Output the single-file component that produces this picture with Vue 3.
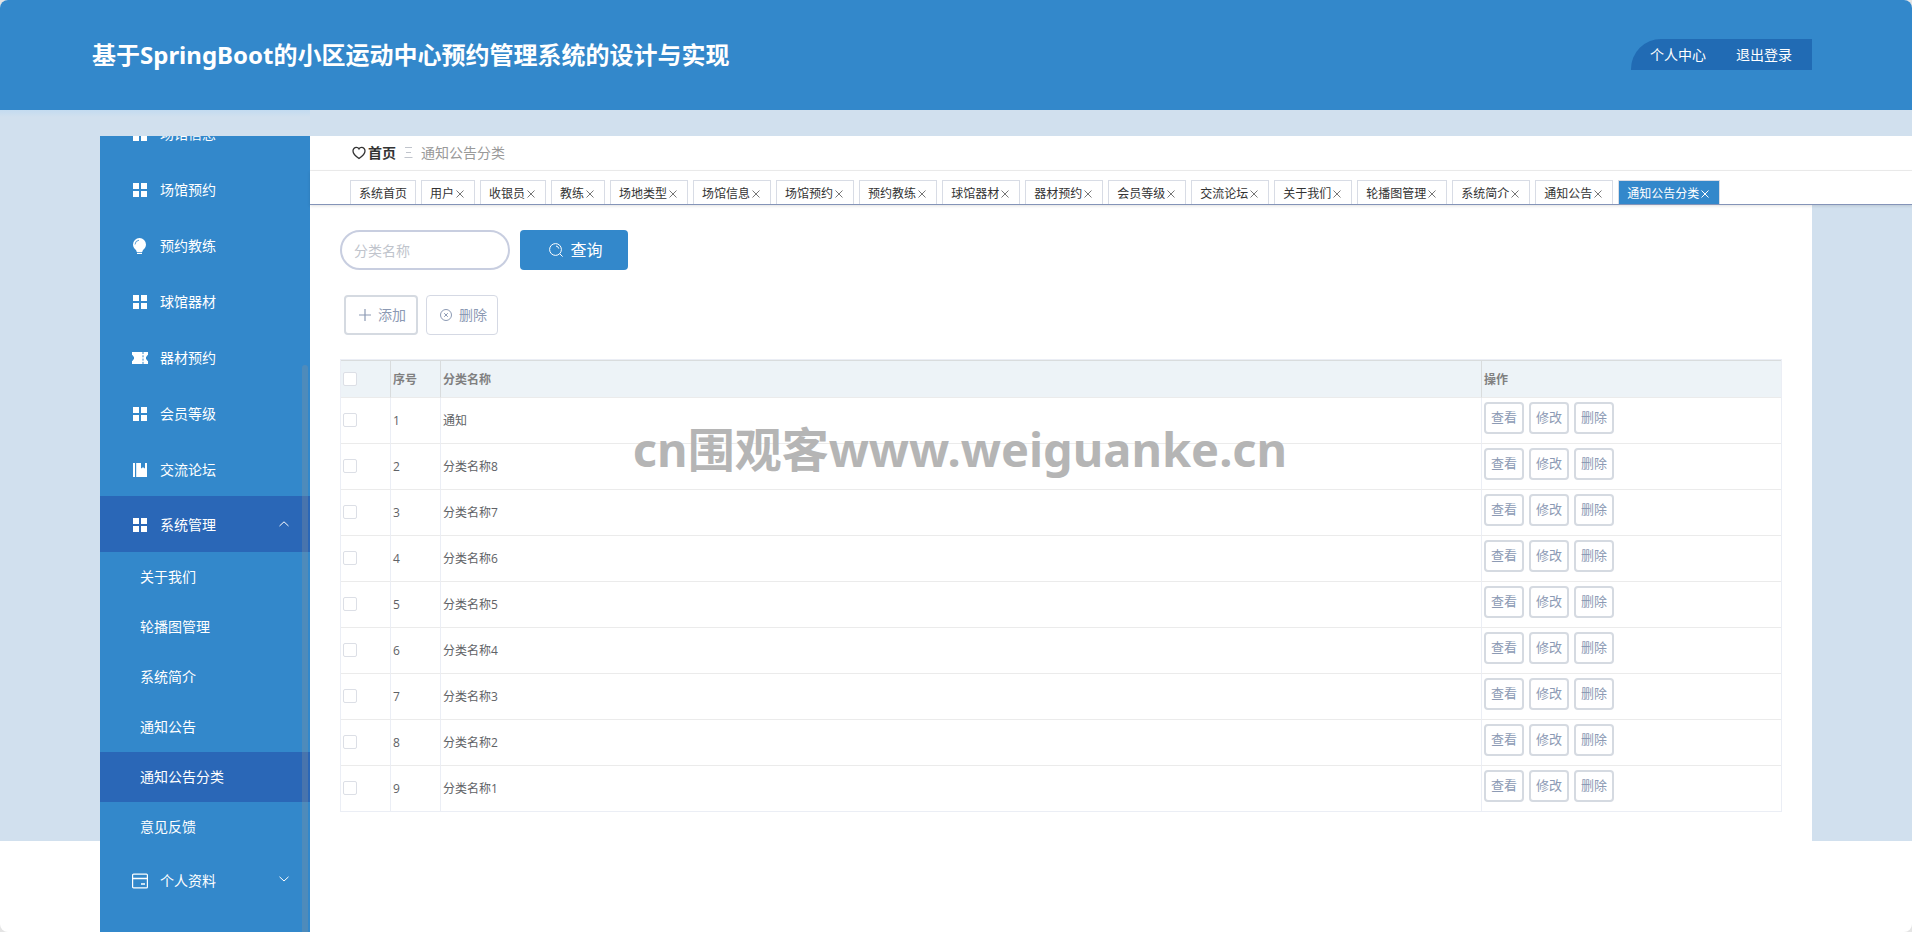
<script setup>
import { ref } from 'vue'

const menu = [
  { label: '场馆信息', icon: 'grid' },
  { label: '场馆预约', icon: 'grid' },
  { label: '预约教练', icon: 'bulb' },
  { label: '球馆器材', icon: 'grid' },
  { label: '器材预约', icon: 'ticket' },
  { label: '会员等级', icon: 'grid' },
  { label: '交流论坛', icon: 'book' },
]
const submenu = ['关于我们', '轮播图管理', '系统简介', '通知公告', '通知公告分类', '意见反馈']
const tabs = [
  '系统首页', '用户', '收银员', '教练', '场地类型', '场馆信息', '场馆预约', '预约教练', '球馆器材',
  '器材预约', '会员等级', '交流论坛', '关于我们', '轮播图管理', '系统简介', '通知公告', '通知公告分类',
]
const current = '通知公告分类'
const rows = ['通知', '分类名称8', '分类名称7', '分类名称6', '分类名称5', '分类名称4', '分类名称3', '分类名称2', '分类名称1']
const keyword = ref('')
</script>

<template>
  <div class="shell">
    <header class="top">
      <h1>基于SpringBoot的小区运动中心预约管理系统的设计与实现</h1>
      <nav class="user-nav">
        <a href="#">个人中心</a>
        <a href="#">退出登录</a>
      </nav>
    </header>

    <div class="body">
      <aside class="side">
        <nav class="menu">
          <ul class="menu-list">
            <li v-for="item in menu" :key="item.label">
              <a class="item" href="#">
                <svg class="icon" viewBox="0 0 16 16" aria-hidden="true">
                  <path v-if="item.icon === 'grid'" d="M1 1h6v6H1zM9 1h6v6H9zM1 9h6v6H1zM9 9h6v6H9z" fill="currentColor" />
                  <g v-else-if="item.icon === 'bulb'">
                    <path d="M7.500 0a6.500 6.500 0 0 0-6.500 6.500c0 2.600 1.500 4.200 3 5.500l.8 2h5.400l.8-2c1.500-1.300 3-2.900 3-5.500A6.500 6.500 0 0 0 7.500 0zM5 14.800h5V16H5z" fill="currentColor" />
                    <path d="M3 6.500A4.500 4.500 0 0 1 7 2.200" fill="none" stroke="#3388cb" stroke-width=".8" />
                  </g>
                  <g v-else-if="item.icon === 'ticket'">
                    <path d="M0 2h16v3.200h-1v1.300h-1v3h1v1.300h1V14H0v-3.200h1V9.500h1v-3H1V5.200H0z" fill="currentColor" />
                    <path d="M11 2v12" stroke="#3388cb" stroke-width="1" stroke-dasharray="2 1.300" />
                  </g>
                  <path v-else d="M1 1h2v14H1zM4.200 1H9v5.500l2-1.300 2 1.300V1h2v14H4.200z" fill="currentColor" />
                </svg>
                <span>{{ item.label }}</span>
              </a>
            </li>
            <li>
              <button class="group open" type="button" aria-expanded="true">
                <svg class="icon" viewBox="0 0 16 16" aria-hidden="true">
                  <path d="M1 1h6v6H1zM9 1h6v6H9zM1 9h6v6H1zM9 9h6v6H9z" fill="currentColor" />
                </svg>
                <span>系统管理</span>
                <svg class="arrow" viewBox="0 0 12 12" aria-hidden="true"><path d="M1.500 7L6 2.800 10.500 7" /></svg>
              </button>
              <ul>
                <li v-for="name in submenu" :key="name">
                  <a class="sub" :class="{ active: name === current }" href="#">{{ name }}</a>
                </li>
              </ul>
            </li>
            <li>
              <button class="group" type="button" aria-expanded="false">
                <svg class="icon" viewBox="0 0 16 16" fill="none" stroke="currentColor" aria-hidden="true">
                  <rect x=".6" y="1.100" width="14.800" height="13.800" rx="1" stroke-width="1.200" />
                  <path d="M.6 5.500h14.800M9 11h4" stroke-width="1.300" />
                </svg>
                <span>个人资料</span>
                <svg class="arrow" viewBox="0 0 12 12" aria-hidden="true"><path d="M1.500 1.800L6 6l4.500-4.200" /></svg>
              </button>
            </li>
          </ul>
          <div class="scroll-thumb"></div>
        </nav>
      </aside>

      <main class="main">
        <div class="crumbs">
          <svg class="heart" viewBox="0 0 14 14" fill="none" stroke="currentColor" stroke-width="1.300" aria-hidden="true">
            <path d="M7 12.500C4.800 11 1 8.300 1 5a3.400 3.400 0 0 1 3.400-3.600C5.600 1.400 6.500 2 7 2.900c.5-.9 1.400-1.500 2.600-1.500A3.400 3.400 0 0 1 13 5c0 3.300-3.800 6-6 7.500z" />
          </svg>
          <a class="home" href="#">首页</a>
          <svg class="sep" viewBox="0 0 9 12" fill="none" stroke="currentColor" aria-hidden="true">
            <path d="M1 .5h7M2 5.500h5M.500 10.500h8" />
          </svg>
          <span class="here">{{ current }}</span>
        </div>

        <div class="tabs">
          <div v-for="(tab, i) in tabs" :key="tab" class="tab" :class="{ active: tab === current }">
            <a href="#">{{ tab }}</a>
            <button v-if="i > 0" type="button" :aria-label="'关闭' + tab">
              <svg viewBox="0 0 12 12" aria-hidden="true"><path d="M2.500 2.500l7 7M9.500 2.500l-7 7" /></svg>
            </button>
          </div>
        </div>

        <section class="content">
          <form class="search" @submit.prevent>
            <input v-model="keyword" type="text" placeholder="分类名称" aria-label="分类名称" />
            <button type="submit">
              <svg viewBox="0 0 14 14" fill="none" stroke="currentColor" aria-hidden="true">
                <circle cx="6.500" cy="6.500" r="5.900" />
                <path d="M10.800 10.800L13.600 13.600M7 3a3.300 3.300 0 0 1 2.800 2.600" />
              </svg>
              <span>查询</span>
            </button>
          </form>

          <div class="actions">
            <button class="add" type="button">
              <svg viewBox="0 0 12 12" fill="none" stroke="currentColor" stroke-width="1.200" aria-hidden="true"><path d="M6 0v12M0 6h12" /></svg>
              <span>添加</span>
            </button>
            <button class="remove" type="button">
              <svg viewBox="0 0 12 12" fill="none" stroke="currentColor" aria-hidden="true">
                <circle cx="6" cy="6" r="5.500" /><path d="M4.200 4.200l3.600 3.600M7.800 4.200L4.200 7.800" />
              </svg>
              <span>删除</span>
            </button>
          </div>

          <table>
            <colgroup><col class="c-check" /><col class="c-no" /><col /><col class="c-ops" /></colgroup>
            <thead>
              <tr>
                <th><input type="checkbox" aria-label="全选" /></th>
                <th>序号</th>
                <th>分类名称</th>
                <th>操作</th>
              </tr>
            </thead>
            <tbody>
              <tr v-for="(name, i) in rows" :key="name">
                <td><input type="checkbox" :aria-label="'选择' + name" /></td>
                <td>{{ i + 1 }}</td>
                <td>{{ name }}</td>
                <td>
                  <div class="ops">
                    <button type="button">查看</button>
                    <button type="button">修改</button>
                    <button type="button">删除</button>
                  </div>
                </td>
              </tr>
            </tbody>
          </table>
        </section>
      </main>
    </div>

    <div class="watermark">cn围观客www.weiguanke.cn</div>
  </div>
</template>

<style>
body {
  margin: 0;
  background: #e4e4e4;
}
</style>

<style scoped>
* {
  box-sizing: border-box;
}
.shell {
  position: relative;
  display: flex;
  flex-direction: column;
  min-height: 100vh;
  overflow: hidden;
  border-radius: 8px;
  background: #fff;
  color: #333;
  font: 14px/20px "Open Sans", "Noto Sans CJK SC", sans-serif;
}
a {
  color: inherit;
  text-decoration: none;
}
ul {
  margin: 0;
  padding: 0;
  list-style: none;
}
button,
input {
  margin: 0;
  font: inherit;
}
button {
  cursor: pointer;
}
svg {
  display: block;
  flex: none;
}

.top {
  display: flex;
  align-items: center;
  justify-content: space-between;
  height: 110px;
  padding: 0 100px 0 92px;
  background: #3388cb;
  color: #fff;
}
.top h1 {
  margin: 0;
  font-family: "Noto Sans", "Noto Sans CJK SC", sans-serif;
  font-size: 24px;
  line-height: 32px;
}
.user-nav {
  display: flex;
  gap: 30px;
  margin-bottom: 2px;
  padding: 0 20px 0 19px;
  border-radius: 30px 0 0 0;
  background: #216bb4;
  line-height: 31px;
}

.body {
  display: flex;
  flex: 1;
  background: linear-gradient(#d1e0ee, #d1e0ee) no-repeat top / 100% calc(100% - 91px);
}
.side {
  display: flex;
  flex: none;
  width: 310px;
  padding: 26px 0 0 100px;
  background: linear-gradient(#c3dbf0, #d1e0ee) no-repeat top / 100% 7px;
}
.menu {
  position: relative;
  flex: 1;
  overflow: hidden;
  background: #3388cb;
  color: #fff;
}
.menu-list {
  margin-top: -32px;
}
.item,
.group {
  display: flex;
  align-items: center;
  gap: 12px;
  width: 100%;
  height: 56px;
  padding: 2px 20px 0 32px;
}
.item {
  padding-top: 4px;
}
.group {
  border: 0;
  background: none;
  color: inherit;
  text-align: left;
}
.group span {
  flex: 1;
}
.open,
.sub.active {
  background: #2a67b7;
}
.icon {
  width: 16px;
  height: 16px;
}
.arrow {
  width: 12px;
  height: 12px;
  fill: none;
  stroke: #fff;
  stroke-width: 1;
}
.sub {
  display: block;
  padding-left: 40px;
  line-height: 50px;
}
.scroll-thumb {
  position: absolute;
  top: 229px;
  right: 2px;
  bottom: 0;
  width: 6px;
  border-radius: 4px 4px 0 0;
  background: rgba(144, 147, 153, 0.3);
}

.main {
  flex: 1;
  min-width: 0;
  padding-top: 26px;
}
.crumbs {
  display: flex;
  align-items: center;
  height: 35px;
  padding-left: 42px;
  border-bottom: 1px solid #eee;
  background: #fff;
}
.heart {
  width: 14px;
  height: 14px;
}
.home {
  margin-left: 2px;
  font-weight: 700;
}
.sep {
  width: 9px;
  height: 12px;
  margin: 0 8px;
  color: #c0c4cc;
}
.here {
  color: #999;
}
.tabs {
  position: relative;
  display: flex;
  gap: 5px;
  padding: 9px 0 0 40px;
  border-bottom: 1px solid #8494b8;
  background: #fff;
  box-shadow: 0 1px 3px rgba(0, 0, 0, 0.12);
  font-size: 12px;
  white-space: nowrap;
}
.tab {
  display: flex;
  align-items: center;
  height: 24px;
  padding: 2px 8px 0;
  border: 1px solid #d8dce5;
  border-bottom: 0;
}
.tab button {
  padding: 0;
  border: 0;
  background: none;
}
.tab svg {
  width: 12px;
  height: 12px;
  fill: none;
  stroke: #777;
}
.tab.active {
  background: #3388cb;
  color: #fff;
}
.tab.active svg {
  stroke: #fff;
}

.content {
  margin-right: 100px;
  padding: 25px 30px 30px;
  background: #fff;
}
.search {
  display: flex;
  align-items: center;
  gap: 10px;
}
.search input {
  width: 170px;
  height: 40px;
  padding: 0 12px;
  border: 2px solid #c8cee0;
  border-radius: 20px;
  background: #fff;
  color: #606266;
  outline: 0;
}
.search input::placeholder {
  color: #c0c4cc;
}
.search button {
  display: flex;
  align-items: center;
  justify-content: center;
  gap: 7px;
  width: 108px;
  height: 40px;
  padding: 0 0 0 4px;
  border: 0;
  border-radius: 4px;
  background: #3388cb;
  color: #fff;
  font-size: 16px;
}
.search svg {
  width: 14px;
  height: 14px;
}
.actions {
  display: flex;
  gap: 8px;
  margin: 25px 0 24px;
  padding-left: 4px;
}
.actions button {
  display: flex;
  align-items: center;
  gap: 7px;
  height: 40px;
  padding: 0 10px 0 13px;
  border: 2px solid #d5dae1;
  border-radius: 4px;
  background: #fff;
  color: #8c9ab4;
}
.actions .remove {
  border: 1px solid #d5d9e4;
}
.actions svg {
  width: 12px;
  height: 12px;
}

table {
  width: 100%;
  border: 1px solid #ebeef5;
  border-collapse: separate;
  border-spacing: 0;
  table-layout: fixed;
  color: #606266;
  font-size: 12px;
}
.c-check,
.c-no {
  width: 50px;
}
.c-ops {
  width: 299px;
}
th,
td {
  padding: 0 2px;
  border-right: 1px solid #ebeef5;
  border-bottom: 1px solid #ebebeb;
  text-align: left;
}
th:last-child,
td:last-child {
  border-right: 0;
}
tbody tr:last-child td {
  height: 45px;
  border-bottom: 0;
}
th {
  height: 38px;
  padding-top: 2px;
  border-top: 1px solid #d9dcdd;
  border-right-color: #d9dcdd;
  background: #edf3f7;
  color: #808080;
}
td {
  height: 46px;
}
table input {
  display: block;
  width: 14px;
  height: 14px;
  margin-bottom: 2px;
  border: 1px solid #dcdfe6;
  border-radius: 2px;
  background: #fff;
  appearance: none;
}
.ops {
  display: flex;
  gap: 5px;
  padding-bottom: 5px;
}
.ops button {
  width: 40px;
  height: 32px;
  padding: 0 0 2px;
  border: 2px solid #d5dae1;
  border-radius: 4px;
  background: #fff;
  color: #8c9ab4;
  font-size: 13px;
  line-height: 18px;
}

.watermark {
  position: absolute;
  top: 419px;
  right: 0;
  left: 8px;
  color: #b5b5b5;
  font: 700 47px/60px "Noto Sans", "Noto Sans CJK SC", sans-serif;
  text-align: center;
  pointer-events: none;
}
</style>
